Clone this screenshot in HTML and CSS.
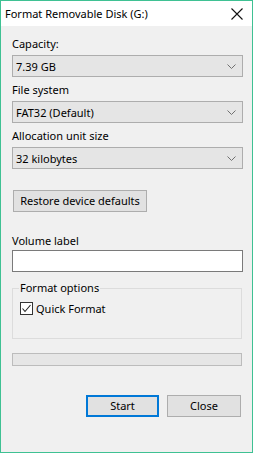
FILE: index.html
```html
<!DOCTYPE html>
<html lang="en">
<head>
    <meta charset="UTF-8">
    <meta name="viewport" content="width=device-width, initial-scale=1.0">
    <title>Format Removable Disk (G:)</title>
    <link rel="stylesheet" href="styles.css">
</head>
<body>
    <div class="window">
        <div class="titlebar">
            <span class="title">Format Removable Disk (G:)</span>
            <svg class="close-icon" width="12" height="12" viewBox="0 0 12 12">
                <path d="M0.5 0.5 L11.5 11.5 M11.5 0.5 L0.5 11.5" stroke="#111" stroke-width="1.1" fill="none"/>
            </svg>
        </div>

        <div class="content">
            <div class="label first">Capacity:</div>
            <div class="combo">
                <span>7.39 GB</span>
                <svg class="chevron" width="9" height="5" viewBox="0 0 9 5"><polyline points="0.5,0.5 4.5,4.5 8.5,0.5" stroke="#707070" fill="none"/></svg>
            </div>

            <div class="label">File system</div>
            <div class="combo">
                <span>FAT32 (Default)</span>
                <svg class="chevron" width="9" height="5" viewBox="0 0 9 5"><polyline points="0.5,0.5 4.5,4.5 8.5,0.5" stroke="#707070" fill="none"/></svg>
            </div>

            <div class="label">Allocation unit size</div>
            <div class="combo">
                <span>32 kilobytes</span>
                <svg class="chevron" width="9" height="5" viewBox="0 0 9 5"><polyline points="0.5,0.5 4.5,4.5 8.5,0.5" stroke="#707070" fill="none"/></svg>
            </div>

            <button class="btn restore">Restore device defaults</button>

            <div class="label volume">Volume label</div>
            <div class="textbox"></div>

            <fieldset class="options">
                <legend>Format options</legend>
                <label class="check-row">
                    <svg class="checkbox" width="13" height="13" viewBox="0 0 13 13">
                        <rect x="0.5" y="0.5" width="12" height="12" fill="#fff" stroke="#333"/>
                        <polyline points="2.5,6.5 5,9.5 10.5,3" stroke="#222" stroke-width="1.1" fill="none"/>
                    </svg>
                    <span>Quick Format</span>
                </label>
            </fieldset>

            <div class="progress"></div>

            <div class="actions">
                <button class="btn primary">Start</button>
                <button class="btn">Close</button>
            </div>
        </div>
    </div>
</body>
</html>
```

FILE: styles.css
```css
html, body {
    margin: 0;
    padding: 0;
}
body {
    font-family: 'Noto Sans', 'Open Sans', sans-serif;
    font-size: 11px;
    color: #000;
    background-color: #f0f0f0;
}
.window {
    width: 253px;
    height: 453px;
    box-sizing: border-box;
    border: 1px solid #3fc193;
    background-color: #f0f0f0;
    overflow: hidden;
}
.titlebar {
    height: 25px;
    background-color: #fff;
    display: flex;
    align-items: center;
    justify-content: space-between;
    padding: 0 9px 0 4px;
}
.title {
    font-size: 11px;
    line-height: 16px;
}
.content {
    padding: 0 9px 0 11px;
}
.label {
    line-height: 15px;
    height: 15px;
    margin-top: 5px;
    margin-bottom: 4px;
}
.label.first {
    margin-top: 10px;
}
.combo {
    height: 22px;
    box-sizing: border-box;
    border: 1px solid #adadad;
    background-color: #e5e5e5;
    display: flex;
    align-items: center;
    justify-content: space-between;
    padding: 0 6px 0 3px;
}
.btn {
    font-family: inherit;
    font-size: 11px;
    height: 22px;
    box-sizing: border-box;
    border: 1px solid #adadad;
    background-color: #e1e1e1;
    color: #000;
    padding: 0;
    line-height: 18px;
}
.restore {
    display: block;
    width: 134px;
    margin: 21px 0 0 1px;
}
.label.volume {
    margin-top: 21px;
    margin-bottom: 2px;
}
.textbox {
    height: 22px;
    box-sizing: border-box;
    border: 1px solid #7a7a7a;
    background-color: #fff;
}
.options {
    margin: 9px 1px 0 0;
    height: 58px;
    box-sizing: border-box;
    border: 1px solid #dcdcdc;
    padding: 0 6px 0 7px;
}
.options legend {
    padding: 0 1px;
    margin-left: -1px;
    line-height: 14px;
}
.check-row {
    display: flex;
    align-items: center;
    gap: 3px;
    margin-top: 6px;
}
.checkbox {
    flex: none;
}
.progress {
    margin: 14px 1px 0 0;
    height: 13px;
    box-sizing: border-box;
    border: 1px solid #bcbcbc;
    background-color: #e6e6e6;
}
.actions {
    display: flex;
    justify-content: flex-end;
    gap: 8px;
    margin-top: 29px;
    padding-right: 2px;
}
.actions .btn {
    width: 74px;
}
.btn.primary {
    border: 2px solid #0078d7;
    width: 73px;
}
```
